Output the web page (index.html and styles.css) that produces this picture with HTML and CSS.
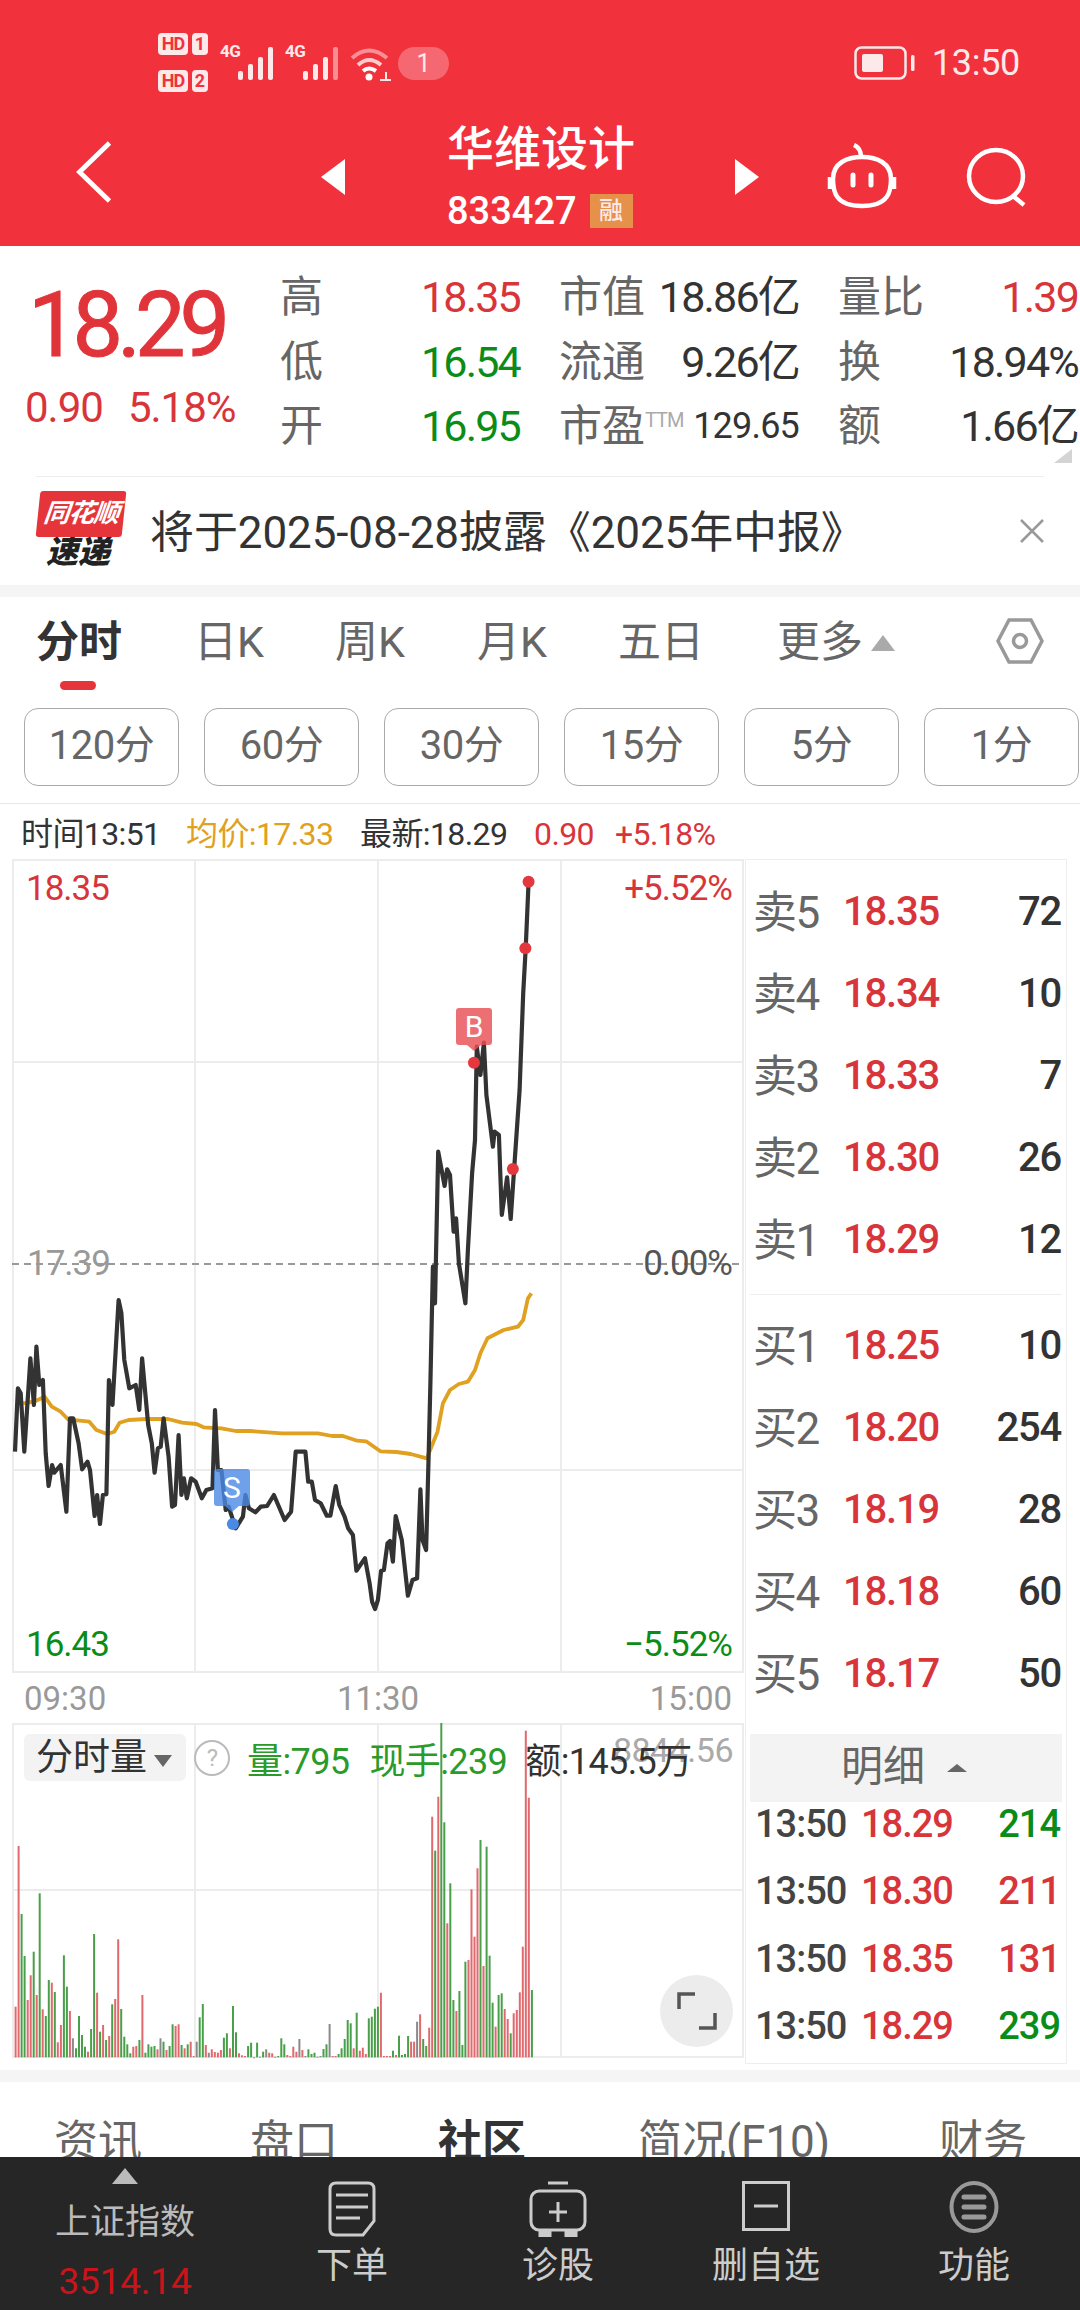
FILE: index.html
```html
<!DOCTYPE html>
<html lang="zh-CN">
<head>
<meta charset="UTF-8">
<meta name="viewport" content="width=device-width, initial-scale=1.0">
<title>华维设计 833427</title>
<link rel="stylesheet" href="styles.css">
</head>
<body>

<!-- top red header -->
<header class="header">
  <div class="statusbar">
    <div class="sims">
      <div class="sim"><span class="hd">HD</span><span class="slot">1</span></div>
      <div class="sim"><span class="hd">HD</span><span class="slot">2</span></div>
    </div>
    <div class="signal">
      <span class="net">4G</span>
      <svg width="38" height="34" viewBox="0 0 38 34"><g fill="#fde9ea"><rect y="25" width="5" height="9" rx="2"/><rect x="10" y="18" width="5" height="16" rx="2"/><rect x="20" y="11" width="5" height="23" rx="2"/><rect x="30" y="1" width="5" height="33" rx="2"/></g></svg>
    </div>
    <div class="signal">
      <span class="net">4G</span>
      <svg width="38" height="34" viewBox="0 0 38 34"><g fill="#fde9ea"><rect y="25" width="5" height="9" rx="2"/><rect x="10" y="18" width="5" height="16" rx="2"/><rect x="20" y="11" width="5" height="23" rx="2"/><rect x="30" y="1" width="5" height="33" rx="2" opacity=".5"/></g></svg>
    </div>
    <svg class="wifi" width="42" height="36" viewBox="0 0 42 36" fill="none" stroke="#fbb" stroke-width="4"><path d="M2 12Q19 -3 37 12" stroke="#f98f94"/><path d="M8 19Q19 9 31 19" stroke="#fcc"/><path d="M13 25Q19 20 26 25" stroke="#fff"/><circle cx="19" cy="31" r="3.5" fill="#fff" stroke="none"/><path d="M30 34h11M36 26v9" stroke="#fde9ea" stroke-width="2"/></svg>
    <span class="notif">1</span>
    <div class="status-right">
      <svg width="62" height="34" viewBox="0 0 62 34" fill="none"><rect x="1.5" y="1.5" width="50" height="31" rx="6" stroke="#fde9ea" stroke-width="2.5"/><rect x="8" y="8" width="21" height="18" rx="2" fill="#fde9ea"/><rect x="57" y="9" width="3.5" height="16" rx="1.5" fill="#fde9ea"/></svg>
      <span class="clock">13:50</span>
    </div>
  </div>
  <div class="navbar">
    <svg class="back" width="36" height="64" viewBox="0 0 36 64" fill="none" stroke="#fff" stroke-width="5"><path d="M34 2L3 32l31 30"/></svg>
    <svg class="prev" width="24" height="36" viewBox="0 0 24 36"><path d="M24 0V36L0 18Z" fill="#fff"/></svg>
    <div class="stock">
      <div class="stock-name">华维设计</div>
      <div class="stock-code">833427<span class="rong">融</span></div>
    </div>
    <svg class="next" width="24" height="36" viewBox="0 0 24 36"><path d="M0 0V36L24 18Z" fill="#fff"/></svg>
    <svg class="robot" width="70" height="66" viewBox="0 0 70 66" fill="none" stroke="#fff" stroke-width="4.5"><path d="M27 2q7 3 7 12"/><path d="M6 36C6 20 20 14 35 14s29 6 29 22c0 12-2 27-29 27S6 48 6 36Z"/><path d="M3 34v12M67 34v12"/><path d="M26 32v10M44 32v10" stroke-width="5" stroke-linecap="round"/></svg>
    <svg class="search" width="62" height="60" viewBox="0 0 62 60" fill="none" stroke="#fff" stroke-width="4.5"><ellipse cx="30" cy="29" rx="27" ry="26"/><path d="M47 49l11 9"/></svg>
  </div>
</header>

<!-- quote summary -->
<section class="quote">
  <div class="price-box">
    <div class="last">18.29</div>
    <div class="change"><span>0.90</span><span>5.18%</span></div>
  </div>
  <div class="stats">
    <div class="stat"><span class="k">高</span><span class="v red">18.35</span></div>
    <div class="stat"><span class="k">市值</span><span class="v">18.86亿</span></div>
    <div class="stat"><span class="k">量比</span><span class="v red">1.39</span></div>
    <div class="stat"><span class="k">低</span><span class="v green">16.54</span></div>
    <div class="stat"><span class="k">流通</span><span class="v">9.26亿</span></div>
    <div class="stat"><span class="k">换</span><span class="v">18.94%</span></div>
    <div class="stat"><span class="k">开</span><span class="v green">16.95</span></div>
    <div class="stat"><span class="k">市盈<sup class="ttm">TTM</sup></span><span class="v small">129.65</span></div>
    <div class="stat"><span class="k">额</span><span class="v">1.66亿</span></div>
  </div>
  <span class="corner"></span>
</section>

<!-- notice -->
<section class="notice">
  <div class="flash">
    <div class="flash-top">同花顺</div>
    <div class="flash-bottom">速递</div>
  </div>
  <div class="notice-text">将于2025-08-28披露《2025年中报》</div>
  <svg class="close" width="24" height="24" viewBox="0 0 24 24" stroke="#999" stroke-width="2.5"><path d="M1 1l22 22M23 1L1 23"/></svg>
</section>

<div class="band"></div>

<!-- period tabs -->
<nav class="tabs">
  <span class="tab active">分时</span>
  <span class="tab t1">日K</span>
  <span class="tab t2">周K</span>
  <span class="tab t3">月K</span>
  <span class="tab t4">五日</span>
  <span class="tab t5">更多<i class="up"></i></span>
  <svg class="hexa" width="48" height="46" viewBox="0 0 48 46" fill="none" stroke="#999" stroke-width="3.5"><path d="M13 2h22l11 21-11 21H13L2 23Z"/><circle cx="24" cy="23" r="6.5"/></svg>
</nav>
<div class="indicator"></div>

<div class="periods">
  <span class="period">120分</span>
  <span class="period">60分</span>
  <span class="period">30分</span>
  <span class="period">15分</span>
  <span class="period">5分</span>
  <span class="period">1分</span>
</div>

<div class="inforow">
  <span class="i-time">时间13:51</span>
  <span class="i-avg">均价:17.33</span>
  <span class="i-new">最新:18.29</span>
  <span class="i-chg">0.90</span>
  <span class="i-pct">+5.18%</span>
</div>

<!-- chart + order book -->
<section class="market">
  <div class="charts">
    <div class="price-chart">
      <svg id="priceSvg" class="plot" width="732" height="815"></svg>
      <span class="lab tl red">18.35</span>
      <span class="lab tr red">+5.52%</span>
      <span class="lab ml gray">17.39</span>
      <span class="lab mr">0.00%</span>
      <span class="lab bl green">16.43</span>
      <span class="lab br green">−5.52%</span>
      <span class="mark mark-b">B</span>
      <span class="mark mark-s">S</span>
    </div>
    <div class="axis"><span>09:30</span><span>11:30</span><span>15:00</span></div>
    <div class="vol-chart">
      <svg id="volSvg" class="plot" width="732" height="336"></svg>
      <span class="ghost">8844.56</span>
      <div class="vol-head">
        <span class="vol-type">分时量<i class="down"></i></span>
        <span class="help">?</span>
        <span class="vol-a">量:795</span>
        <span class="vol-b">现手:239</span>
        <span class="vol-c">额:145.5万</span>
      </div>
      <span class="expand">
        <svg width="40" height="40" viewBox="0 0 40 40" fill="none" stroke="#555" stroke-width="3.5"><path d="M2 18V3h16M38 22v15H22"/></svg>
      </span>
    </div>
  </div>

  <div class="book">
    <div class="level"><span class="lv">卖5</span><span class="lp">18.35</span><span class="lq">72</span></div>
    <div class="level"><span class="lv">卖4</span><span class="lp">18.34</span><span class="lq">10</span></div>
    <div class="level"><span class="lv">卖3</span><span class="lp">18.33</span><span class="lq">7</span></div>
    <div class="level"><span class="lv">卖2</span><span class="lp">18.30</span><span class="lq">26</span></div>
    <div class="level"><span class="lv">卖1</span><span class="lp">18.29</span><span class="lq">12</span></div>
    <div class="book-split"></div>
    <div class="level"><span class="lv">买1</span><span class="lp">18.25</span><span class="lq">10</span></div>
    <div class="level"><span class="lv">买2</span><span class="lp">18.20</span><span class="lq">254</span></div>
    <div class="level"><span class="lv">买3</span><span class="lp">18.19</span><span class="lq">28</span></div>
    <div class="level"><span class="lv">买4</span><span class="lp">18.18</span><span class="lq">60</span></div>
    <div class="level"><span class="lv">买5</span><span class="lp">18.17</span><span class="lq">50</span></div>
    <div class="detail-head">明细<i class="up dark"></i></div>
    <div class="ticks">
      <div class="tick"><span class="tt">13:50</span><span class="tp">18.29</span><span class="tq green">214</span></div>
      <div class="tick"><span class="tt">13:50</span><span class="tp">18.30</span><span class="tq red">211</span></div>
      <div class="tick"><span class="tt">13:50</span><span class="tp">18.35</span><span class="tq red">131</span></div>
      <div class="tick"><span class="tt">13:50</span><span class="tp">18.29</span><span class="tq green">239</span></div>
    </div>
  </div>
</section>

<div class="band"></div>

<nav class="subtabs">
  <span class="st s1">资讯</span>
  <span class="st s2">盘口</span>
  <span class="st s3 on">社区</span>
  <span class="st s4">简况(F10)</span>
  <span class="st s5">财务</span>
</nav>

<!-- bottom toolbar -->
<footer class="toolbar">
  <div class="index">
    <i class="index-up"></i>
    <div class="index-name">上证指数</div>
    <div class="index-val">3514.14</div>
  </div>
  <div class="tool tool1">
    <svg width="48" height="56" viewBox="0 0 48 56" fill="none" stroke="#ccc" stroke-width="3"><path d="M8 2h32q6 0 6 6v32L35 54H8q-6 0-6-6V8q0-6 6-6Z"/><path d="M8 14h32M8 26h32M8 37h24"/></svg>
    <span>下单</span>
  </div>
  <div class="tool tool2">
    <svg width="58" height="56" viewBox="0 0 58 56" fill="none" stroke="#ccc" stroke-width="3"><path d="M19 2h20"/><rect x="2" y="10" width="54" height="39" rx="8"/><path d="M29 21v20M20 31h18"/><path d="M11 49v6h10v-6M37 49v6h10v-6" fill="#ccc"/></svg>
    <span>诊股</span>
  </div>
  <div class="tool tool3">
    <svg width="48" height="50" viewBox="0 0 48 50" fill="none" stroke="#ccc" stroke-width="3"><rect x="1.5" y="1.5" width="45" height="47"/><path d="M12 25h24"/></svg>
    <span>删自选</span>
  </div>
  <div class="tool tool4">
    <svg width="50" height="52" viewBox="0 0 50 52" fill="none"><ellipse cx="25" cy="26" rx="22.5" ry="24" stroke="#999" stroke-width="4"/><path d="M15 16h20M15 26h20M15 36h20" stroke="#999" stroke-width="5" stroke-linecap="round"/></svg>
    <span>功能</span>
  </div>
</footer>

<script src="chart.js"></script>
</body>
</html>
```

FILE: styles.css
```css
* { box-sizing: border-box; }

body {
  margin: 0;
  width: 1080px;
  height: 2310px;
  overflow: hidden;
  background: #fff;
  color: #333;
  font-family: "Roboto", "Noto Sans CJK SC", sans-serif;
}

.red { color: #d8353a; }
.green { color: #0b8c17; }
.gray { color: #999; }

/* header */
.header {
  height: 246px;
  background: #f1323c;
  color: #fff;
}

.statusbar {
  height: 108px;
  padding: 33px 60px 0 158px;
  display: flex;
  align-items: flex-start;
}

.sims { width: 52px; margin-right: 10px; }
.sim { display: flex; gap: 4px; margin-bottom: 15px; height: 22px; }
.hd, .slot {
  background: #fde9ea;
  color: #f1323c;
  border-radius: 4px;
  font-size: 18px;
  line-height: 22px;
  font-weight: 700;
  text-align: center;
}
.hd { width: 30px; letter-spacing: -1px; }
.slot { width: 16px; }

.signal { position: relative; width: 65px; height: 46px; padding: 13px 0 0 18px; }
.net {
  position: absolute;
  left: 0;
  top: 8px;
  font-size: 17px;
  font-weight: 700;
  letter-spacing: -0.5px;
  color: #fde9ea;
}

.wifi { margin: 13px 6px 0 0; }

.notif {
  width: 51px;
  height: 33px;
  margin-top: 14px;
  border-radius: 17px;
  background: #f56872;
  color: #fde9ea;
  font-size: 25px;
  line-height: 33px;
  text-align: center;
}

.status-right { margin-left: auto; display: flex; align-items: center; gap: 16px; margin-top: 13px; }
.clock { font-size: 36px; line-height: 34px; letter-spacing: -0.3px; color: #fde9ea; }

.navbar {
  height: 138px;
  position: relative;
  display: flex;
  align-items: flex-start;
  padding-left: 76px;
}

.back { margin-top: 33px; height: 62px; }
.prev { margin: 51px 0 0 209px; }
.stock { width: 186px; margin: 10px 0 0 102px; }
.stock-name { font-size: 47px; line-height: 62px; font-weight: 500; white-space: nowrap; }
.stock-code { display: flex; align-items: center; gap: 13px; font-size: 38px; line-height: 38px; font-weight: 500; margin-top: 12px; }
.rong {
  width: 43px;
  height: 34px;
  background: #e6914a;
  color: #fde9ea;
  font-size: 24px;
  line-height: 34px;
  text-align: center;
}
.next { margin: 51px 0 0 102px; }
.robot { margin: 35px 0 0 68px; }
.search { margin: 39px 0 0 69px; }

/* quote */
.quote {
  height: 230px;
  display: flex;
  position: relative;
}

.price-box { width: 281px; padding: 35px 0 0 26px; }
.last {
  font-size: 90px;
  line-height: 90px;
  font-weight: 400;
  letter-spacing: -6px;
  color: #e0343a;
  margin-left: 2px;
  -webkit-text-stroke: 1px #e0343a;
}
.change {
  display: flex;
  gap: 25px;
  margin-top: 13px;
  margin-left: -1px;
  font-size: 42px;
  line-height: 48px;
  letter-spacing: -1px;
  color: #d8353a;
}

.stats {
  display: grid;
  grid-template-columns: 240px 240px 240px;
  grid-auto-rows: 64.5px;
  column-gap: 39px;
  padding-top: 19px;
  margin-left: -1px;
}
.stat { display: flex; justify-content: space-between; align-items: center; white-space: nowrap; }
.k { font-size: 43px; line-height: 50px; color: #666; }
.v { font-size: 43px; line-height: 50px; letter-spacing: -1.8px; }
.v.small { font-size: 36px; letter-spacing: -0.8px; }
.ttm { font-size: 20px; line-height: 20px; color: #aaa; vertical-align: 14px; letter-spacing: -1px; }

.corner {
  position: absolute;
  right: 8px;
  top: 203px;
  width: 0;
  height: 0;
  border-left: 18px solid transparent;
  border-bottom: 14px solid #d4d4d4;
}

/* notice */
.notice {
  height: 109px;
  margin: 0 36px;
  border-top: 1px solid #eee;
  display: flex;
  align-items: center;
  position: relative;
}

.flash { width: 90px; margin-top: -4px; }
.flash-top {
  width: 86px;
  height: 46px;
  margin-left: 2px;
  background: #e5343a;
  border-radius: 3px;
  transform: skewX(-6deg);
  color: #fff;
  font-size: 26px;
  font-weight: 700;
  font-style: italic;
  line-height: 44px;
  text-align: center;
  letter-spacing: -1px;
  white-space: nowrap;
}
.flash-bottom {
  font-size: 32px;
  font-weight: 900;
  font-style: italic;
  line-height: 30px;
  color: #222;
  margin: 0 0 0 10px;
  white-space: nowrap;
}
.notice-text { margin: -5px 0 0 24px; font-size: 44px; color: #333; letter-spacing: -0.1px; white-space: nowrap; }
.close { margin-left: auto; }

.band { height: 12px; background: #f5f5f5; }

/* period tabs */
.tabs {
  height: 84px;
  position: relative;
  font-size: 43px;
  line-height: 50px;
  color: #666;
}
.tab { position: absolute; top: 20px; white-space: nowrap; }
.tab.active { left: 36px; font-weight: 700; color: #333; }
.t1 { left: 194px; }
.t2 { left: 335px; }
.t3 { left: 477px; }
.t4 { left: 618px; }
.t5 { left: 777px; }
.hexa { position: absolute; left: 996px; top: 21px; }

.up {
  display: inline-block;
  width: 0;
  height: 0;
  margin-left: 8px;
  border-left: 12px solid transparent;
  border-right: 12px solid transparent;
  border-bottom: 16px solid #aaa;
  vertical-align: 6px;
}
.up.dark { margin-left: 22px; border-left-width: 10px; border-right-width: 10px; border-bottom: 8px solid #666; vertical-align: 9px; }

.indicator {
  width: 36px;
  height: 9px;
  margin-left: 60px;
  border-radius: 5px;
  background: #e5343a;
}

.periods {
  display: flex;
  gap: 25px;
  padding: 18px 0 0 24px;
  height: 114px;
  border-bottom: 1px solid #e8e8e8;
}
.period {
  width: 155px;
  height: 78px;
  flex: none;
  border: 1px solid #aaa;
  border-radius: 14px;
  color: #666;
  font-size: 40px;
  line-height: 74px;
  text-align: center;
  letter-spacing: -0.5px;
}

.inforow {
  height: 55px;
  padding-left: 21px;
  display: flex;
  font-size: 32px;
  line-height: 60px;
  letter-spacing: -0.6px;
  white-space: nowrap;
}
.i-time { width: 165px; }
.i-avg { width: 174px; color: #e0a020; }
.i-new { width: 174px; }
.i-chg { width: 81px; color: #d8353a; }
.i-pct { color: #d8353a; }

/* chart */
.market { height: 1211px; display: flex; }
.charts { width: 732px; margin-left: 12px; }
.price-chart { height: 813px; position: relative; }
.vol-chart { height: 334px; position: relative; }
.plot { position: absolute; left: 0; top: 0; display: block; }

.axis {
  height: 51px;
  display: flex;
  justify-content: space-between;
  padding: 5px 12px 0 12px;
  font-size: 33px;
  line-height: 44px;
  color: #999;
}

.lab { position: absolute; font-size: 35px; line-height: 40px; letter-spacing: -1px; }
.tl { left: 14px; top: 10px; }
.tr { right: 12px; top: 10px; }
.ml { left: 15px; top: 385px; }
.mr { right: 12px; top: 385px; color: #555; }
.bl { left: 14px; top: 766px; }
.br { right: 12px; top: 766px; }

.mark {
  position: absolute;
  width: 36px;
  height: 37px;
  border-radius: 3px;
  color: #fff;
  font-size: 30px;
  line-height: 37px;
  text-align: center;
}
.mark::after {
  content: "";
  position: absolute;
  left: 11px;
  top: 37px;
  border-left: 7px solid transparent;
  border-right: 7px solid transparent;
}
.mark-b { left: 444px; top: 149px; background: rgba(232, 80, 84, 0.82); }
.mark-b::after { border-top: 6px solid rgba(232, 80, 84, 0.82); }
.mark-s { left: 202px; top: 610px; background: rgba(74, 138, 228, 0.8); }
.mark-s::after { border-top: 6px solid rgba(74, 138, 228, 0.8); }

.vol-head {
  position: absolute;
  left: 12px;
  top: 11px;
  height: 47px;
  display: flex;
  align-items: center;
  font-size: 36px;
  letter-spacing: -0.6px;
  white-space: nowrap;
}
.vol-type {
  width: 162px;
  height: 47px;
  padding-left: 12px;
  background: #f3f3f3;
  border-radius: 6px;
  font-size: 37px;
  line-height: 47px;
  letter-spacing: 0;
  color: #333;
}
.down {
  display: inline-block;
  margin-left: 7px;
  border-left: 9px solid transparent;
  border-right: 9px solid transparent;
  border-top: 12px solid #666;
  vertical-align: 3px;
}
.help {
  width: 36px;
  height: 36px;
  margin-left: 8px;
  border: 2px solid #bbb;
  border-radius: 50%;
  color: #bbb;
  font-size: 24px;
  line-height: 32px;
  text-align: center;
}
.vol-a { margin-left: 17px; color: #2a9a2a; }
.vol-b { margin-left: 20px; color: #2a9a2a; }
.vol-c { margin-left: 18px; color: #333; }
.ghost { position: absolute; right: 11px; top: 7px; font-size: 34px; line-height: 40px; color: #aaa; letter-spacing: -0.5px; }

.expand {
  position: absolute;
  left: 648px;
  top: 252px;
  width: 73px;
  height: 72px;
  border-radius: 50%;
  background: #ececec;
  display: flex;
  align-items: center;
  justify-content: center;
}

/* order book */
.book {
  width: 322px;
  height: 1205px;
  margin-left: 1px;
  padding: 10px 4px 0;
  border: 1px solid #eee;
}
.level { height: 82px; padding: 0 1px 0 3px; display: flex; align-items: center; }
.lv { width: 90px; margin-top: -4px; font-size: 44px; color: #666; letter-spacing: -1.5px; white-space: nowrap; }
.lp { font-size: 40px; font-weight: 500; letter-spacing: -1.2px; color: #d8353a; }
.lq { margin-left: auto; font-size: 40px; font-weight: 500; letter-spacing: -1.2px; color: #333; }
.book-split { height: 1px; margin: 14px 0 9px; background: #eee; }

.detail-head {
  height: 68px;
  margin-top: 20px;
  background: #f3f3f3;
  color: #666;
  font-size: 42px;
  line-height: 66px;
  padding-left: 91px;
}
.ticks { display: grid; grid-auto-rows: 44px; row-gap: 23.3px; }
.tick { padding: 0 2px 0 5px; display: flex; align-items: center; font-size: 38px; font-weight: 500; line-height: 44px; letter-spacing: -1px; }
.tt { width: 106px; color: #444; }
.tp { color: #d8353a; }
.tq { margin-left: auto; }

/* sub tabs, cut off by toolbar */
.subtabs {
  height: 75px;
  position: relative;
  overflow: hidden;
  font-size: 44px;
  color: #666;
}
.st { position: absolute; top: 32px; line-height: 56px; white-space: nowrap; }
.s1 { left: 54px; }
.s2 { left: 250px; }
.s3 { left: 438px; font-weight: 700; color: #333; }
.s4 { left: 638px; }
.s5 { left: 939px; }

/* toolbar */
.toolbar {
  height: 153px;
  background: #262626;
  position: relative;
  display: flex;
  color: #ccc;
}
.index { width: 250px; text-align: center; }
.index-up {
  display: block;
  width: 0;
  height: 0;
  margin: 11px 0 0 112px;
  border-left: 13px solid transparent;
  border-right: 13px solid transparent;
  border-bottom: 16px solid #bbb;
}
.index-name { margin-top: 16px; font-size: 35px; line-height: 46px; color: #bbb; width: 250px; }
.index-val { margin-top: 14px; font-size: 37px; line-height: 44px; color: #c8141a; width: 250px; letter-spacing: -0.2px; }

.tool {
  width: 208px;
  display: flex;
  flex-direction: column;
  align-items: center;
  padding-top: 24px;
  font-size: 36px;
}
.tool span { margin-top: 6px; line-height: 46px; white-space: nowrap; }
.tool1 { width: 204px; }
.tool3 svg { margin-bottom: 6px; }
.tool4 svg { margin-bottom: 4px; }
```

FILE: chart.js
```js
// points were read off a 2.8x / 3x crop of the chart, so scale them back down
var SX = 2.8, SY = 3, LEFT = 12;

var price = [
  [42,1805],[50,1615],[58,1630],[68,1805],[85,1525],[95,1665],[102,1490],[110,1605],[120,1590],[128,1810],
  [136,1908],[146,1845],[152,1868],[170,1845],[186,1985],[196,1705],[205,1705],[220,1780],[230,1858],[245,1835],
  [252,1860],[265,1998],[272,1935],[280,2022],[288,1935],[298,1933],[305,1590],[315,1665],[332,1350],[340,1390],
  [348,1530],[362,1615],[380,1605],[390,1680],[398,1525],[415,1725],[425,1780],[433,1868],[442,1795],[450,1790],
  [458,1705],[472,1820],[482,1970],[490,1965],[500,1755],[508,1935],[515,1885],[523,1945],[535,1885],[548,1895],
  [565,1945],[578,1920],[595,1915],[602,1680],[610,1860],[620,1860],[632,1980],[640,1970],[660,2035],[680,2000],
  [687,1935],[697,1975],[715,1987],[730,1970],[748,1968],[767,1935],[797,2010],[815,1985],[828,1805],[855,1805],
  [863,1895],[873,1895],[882,1950],[898,1960],[915,1997],[925,1997],[940,1908],[950,1965],[965,2000],[975,2035],
  [988,2055],[998,2162],[1022,2125],[1035,2200],[1042,2255],[1050,2277],[1058,2250],[1067,2162],[1075,2160],[1085,2080],
  [1092,2073],[1100,2135],[1108,1998],[1125,2070],[1142,2237],[1155,2190],[1168,2185],[1177,1918],[1183,2070],[1193,2100],
  [1200,1820],[1205,1600],[1212,1250],[1218,1360],[1227,905],[1245,1008],[1252,958],[1260,975],[1270,1145],[1277,1105],
  [1285,1240],[1303,1360],[1310,1200],[1322,970],[1330,870],[1335,590],[1345,675],[1355,578],[1362,735],[1380,890],
  [1385,845],[1397,855],[1405,1095],[1420,982],[1430,1107],[1440,950],[1455,720],[1465,430],[1472,295],[1480,95]
];

var avg = [
  [65,1660],[95,1655],[125,1640],[145,1670],[170,1685],[190,1708],[250,1715],[270,1740],[300,1752],[320,1745],
  [335,1718],[360,1710],[410,1707],[470,1707],[510,1718],[550,1722],[570,1732],[620,1735],[660,1743],[700,1743],
  [790,1750],[890,1750],[930,1758],[960,1758],[1000,1772],[1025,1774],[1065,1804],[1110,1806],[1150,1812],[1195,1825],
  [1225,1745],[1240,1660],[1260,1620],[1285,1602],[1310,1595],[1330,1560],[1345,1510],[1365,1465],[1410,1440],[1450,1430],
  [1465,1410],[1478,1345],[1488,1330]
];

// colour, top of bar in the crop (crop y = 3x, bottom at 1072). r/g/n
var vols = 'r920 r438 g642 g768 r900 r826 g755 r885 g580 r928 g948 g840 r848 g876 r1027 r975 g766 g860 r933 n1015 g1045 g948 g1005 g1040 r1055 g987 g702 r878 g995 r975 g1020 r1008 g913 r897 r718 g927 g1010 g1033 g1060 r1040 r1038 g1020 r885 g1058 g1033 g1040 g1038 r1048 n1015 g1025 r1050 g1038 g973 r978 r973 g1035 r1045 g1033 r1025 r1068 n1025 g952 g912 r1035 n1058 r1048 r1056 r1058 r1050 g1013 g1000 r1045 g918 g997 r1060 r1066 r1068 g1038 g1028 n1072 g1028 n1070 g1055 n1048 r1058 r1060 n1070 g1068 g1015 g1033 r1065 r1068 r1040 r1055 n1017 r1050 n1068 g1048 g1062 g1058 n1070 n1068 g1047 g1033 n972 r1068 r1068 g1062 g1045 g1017 g960 g970 r1045 g938 r1052 r1043 r1062 g955 g950 g926 g920 r878 r1068 r1068 r1068 g1052 r1065 g1007 g1065 g1062 g1008 r1025 r1025 n965 r943 g1017 g1038 r983 r350 g452 r290 g68 g367 r670 g550 g900 r933 g873 g1035 g785 r780 r568 r710 r505 g420 r798 g440 g767 g908 r980 g885 g880 r927 r957 g1000 r940 r930 r877 r740 r92 r293 g870'.split(' ');

var NS = 'http://www.w3.org/2000/svg';

function add(svg, tag, attrs) {
  var el = document.createElementNS(NS, tag);
  for (var k in attrs) el.setAttribute(k, attrs[k]);
  svg.appendChild(el);
  return el;
}

function line(svg, x1, y1, x2, y2, color, dash) {
  var l = add(svg, 'line', { x1: x1, y1: y1, x2: x2, y2: y2, stroke: color, 'stroke-width': 2 });
  if (dash) l.setAttribute('stroke-dasharray', dash);
}

function toPath(points) {
  return points.map(function (p) {
    return ((p[0] / SX) - LEFT).toFixed(1) + ',' + ((p[1] / SY)).toFixed(1);
  }).join(' ');
}

function dot(svg, x, y, color) {
  add(svg, 'circle', { cx: x / SX - LEFT, cy: y / SY, r: 6, fill: color });
}

// price chart (crop y was measured from 850)
var ps = document.getElementById('priceSvg');
var cols = [1, 183, 366, 549, 731];
cols.forEach(function (x) { line(ps, x, 0, x, 813, '#ececec'); });
line(ps, 0, 1, 732, 1, '#ececec');
line(ps, 0, 203, 732, 203, '#ececec');
line(ps, 0, 611, 732, 611, '#ececec');
line(ps, 0, 813, 732, 813, '#ececec');
line(ps, 0, 405, 732, 405, '#999', '7 5');

var g = add(ps, 'g', { transform: 'translate(0,-9)' });
add(g, 'polyline', { points: toPath(avg), fill: 'none', stroke: '#e0a020', 'stroke-width': 3.8, 'stroke-linejoin': 'round' });
add(g, 'polyline', { points: toPath(price), fill: 'none', stroke: '#333', 'stroke-width': 4.2, 'stroke-linejoin': 'round' });
dot(g, 1480, 95, '#e5383e');
dot(g, 1471, 295, '#e5383e');
dot(g, 1327, 638, '#e5383e');
dot(g, 1436, 957, '#e5383e');
dot(g, 652, 2022, '#4a8ae4');

// volume chart
var vs = document.getElementById('volSvg');
cols.forEach(function (x) { line(vs, x, 0, x, 334, '#ececec'); });
line(vs, 0, 1, 732, 1, '#ececec');
line(vs, 0, 167, 732, 167, '#ececec');
line(vs, 0, 334, 732, 334, '#ececec');

var barColor = { r: '#e0696e', g: '#4a9f4a', n: '#8a8a8a' };
vols.forEach(function (v, i) {
  var x = 33 + i * (1127 - 33) / (vols.length - 1);
  var top = parseInt(v.slice(1), 10);
  add(vs, 'rect', {
    x: (x / 2.119 - LEFT - 1).toFixed(1),
    y: (top / 3 - 23).toFixed(1),
    width: 2,
    height: Math.max((1072 - top) / 3, 1).toFixed(1),
    fill: barColor[v.charAt(0)]
  });
});
```
